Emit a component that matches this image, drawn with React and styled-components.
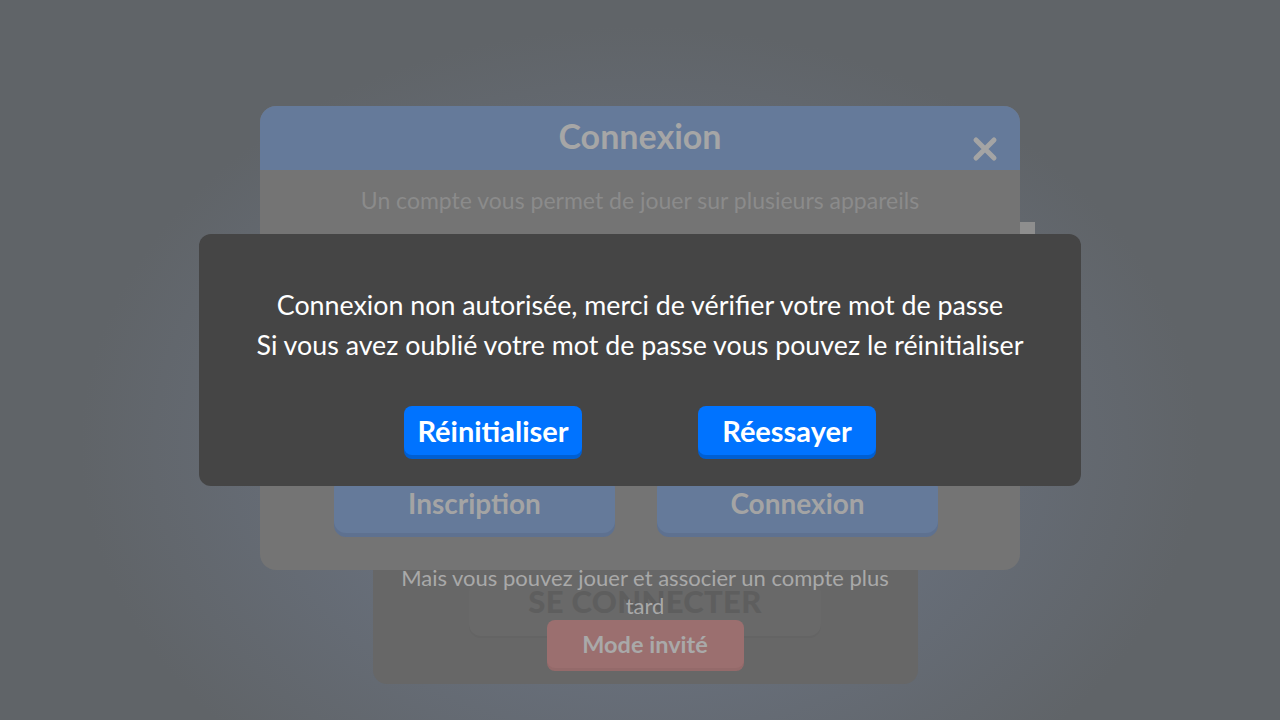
import React from 'react'
import styled, { createGlobalStyle } from 'styled-components'

const GlobalStyle = createGlobalStyle`
    * {
        box-sizing: border-box;
    }
    body {
        margin: 0;
        font-family: 'Lato', 'Open Sans', sans-serif;
    }
`

const Page = styled.div`
    position: relative;
    display: flex;
    flex-direction: column;
    align-items: center;
    width: 1280px;
    height: 720px;
    overflow: hidden;
    background: radial-gradient(ellipse 560px 420px at 50% 62%, #6b7584 0%, #676e79 55%, #606468 100%);
`

const GuestCard = styled.div`
    display: flex;
    flex-direction: column;
    align-items: center;
    width: 545px;
    margin-top: 460px;
    margin-left: 10px;
    padding: 120px 0 16px;
    background-color: #676767;
    border-radius: 14px;
`

const OutlineButton = styled.div`
    display: flex;
    align-items: center;
    justify-content: center;
    width: 352px;
    height: 56px;
    padding-bottom: 14px;
    border-radius: 12px;
    background-color: #696969;
    box-shadow: 0 2px 0 #646464;
    color: #5e5e5e;
    font-size: 31px;
    font-weight: 900;
    letter-spacing: 0.3px;
`

const GuestText = styled.p`
    width: 500px;
    margin: -72px 0 0;
    color: #a9a9a9;
    font-size: 22px;
    line-height: 28px;
    text-align: center;
`

const GuestButton = styled.div`
    display: flex;
    align-items: center;
    justify-content: center;
    width: 197px;
    height: 48px;
    border-radius: 8px;
    background-color: #9b6f6f;
    box-shadow: 0 3px 0 #946a6a;
    color: #a9a9a9;
    font-size: 23.5px;
    font-weight: 700;
`

const ModalLayer = styled.div`
    position: absolute;
    inset: 0;
    display: flex;
    justify-content: center;
    padding-top: 106px;
`

const LoginModal = styled.div`
    position: relative;
    display: flex;
    flex-direction: column;
    width: 760px;
    height: 464px;
    border-radius: 16px;
    background-color: #747474;
`

const ModalHeader = styled.div`
    position: relative;
    display: flex;
    align-items: center;
    justify-content: center;
    height: 64px;
    padding-bottom: 6px;
    border-radius: 16px 16px 0 0;
    background-color: #657a9a;
    color: #a6a6a6;
    font-size: 34px;
    font-weight: 700;
`

const CloseButton = styled.div`
    position: absolute;
    right: 22px;
    top: 22px;
    width: 26px;
    height: 26px;
`

const Subtitle = styled.p`
    margin: 16px 0 0;
    color: #8b8b8b;
    font-size: 23px;
    text-align: center;
`

const ScrollThumb = styled.div`
    position: absolute;
    right: -15px;
    top: 116px;
    width: 15px;
    height: 14px;
    background-color: #8e8e8e;
`

const FormArea = styled.div`
    flex: 1;
`

const ChoiceRow = styled.div`
    display: flex;
    justify-content: center;
    gap: 42px;
    padding: 0 8px 37px 0;
`

const ChoiceButton = styled.div`
    display: flex;
    align-items: center;
    justify-content: center;
    width: 281px;
    height: 56px;
    padding-bottom: 5px;
    border-radius: 12px;
    background-color: #657a9a;
    box-shadow: 0 4px 0 #5e7190;
    color: #a4a4a4;
    font-size: 28px;
    font-weight: 700;
`

const AlertLayer = styled.div`
    position: absolute;
    inset: 0;
    display: flex;
    align-items: center;
    justify-content: center;
`

const AlertBox = styled.div`
    display: flex;
    flex-direction: column;
    align-items: center;
    width: 882px;
    height: 252px;
    padding-top: 51px;
    border-radius: 12px;
    background-color: #454545;
`

const AlertText = styled.p`
    margin: 0;
    color: #ffffff;
    font-size: 26.8px;
    line-height: 40px;
    text-align: center;
`

const AlertActions = styled.div`
    display: flex;
    gap: 116px;
    margin-top: 41px;
`

const AlertButton = styled.button`
    width: 178px;
    height: 49px;
    padding: 0;
    border: none;
    border-radius: 8px;
    background-color: #0073ff;
    box-shadow: 0 4px 0 #005fd2;
    color: #ffffff;
    font-family: inherit;
    font-size: 29px;
    font-weight: 700;
    cursor: pointer;
`

function App() {
    return (
        <>
            <GlobalStyle />
            <Page>
                <GuestCard>
                    <OutlineButton>SE CONNECTER</OutlineButton>
                    <GuestText>Mais vous pouvez jouer et associer un compte plus tard</GuestText>
                    <GuestButton>Mode invité</GuestButton>
                </GuestCard>

                <ModalLayer>
                    <LoginModal>
                        <ModalHeader>
                            Connexion
                            <CloseButton>
                                <svg width="26" height="26" viewBox="0 0 26 26">
                                    <path d="M4 4 L22 22 M22 4 L4 22" stroke="#a4a4a4" strokeWidth="5" strokeLinecap="round" />
                                </svg>
                            </CloseButton>
                        </ModalHeader>
                        <Subtitle>Un compte vous permet de jouer sur plusieurs appareils</Subtitle>
                        <ScrollThumb />
                        <FormArea />
                        <ChoiceRow>
                            <ChoiceButton>Inscription</ChoiceButton>
                            <ChoiceButton>Connexion</ChoiceButton>
                        </ChoiceRow>
                    </LoginModal>
                </ModalLayer>

                <AlertLayer>
                    <AlertBox>
                        <AlertText>Connexion non autorisée, merci de vérifier votre mot de passe</AlertText>
                        <AlertText>Si vous avez oublié votre mot de passe vous pouvez le réinitialiser</AlertText>
                        <AlertActions>
                            <AlertButton>Réinitialiser</AlertButton>
                            <AlertButton>Réessayer</AlertButton>
                        </AlertActions>
                    </AlertBox>
                </AlertLayer>
            </Page>
        </>
    )
}

export default App
